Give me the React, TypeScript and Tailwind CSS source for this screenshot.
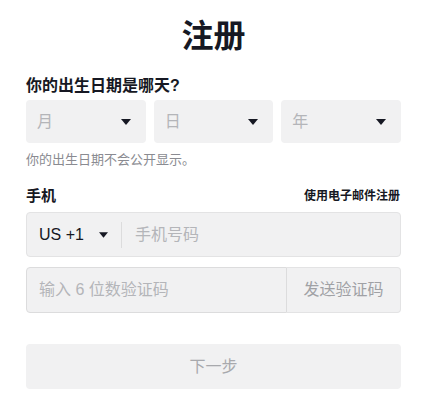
import React from "react";

const FONT = { fontFamily: '"Liberation Sans", "Noto Sans CJK SC", sans-serif' };

function Caret({ w = 10, h = 6 }: { w?: number; h?: number }) {
  return (
    <svg width={w} height={h} viewBox="0 0 10 6" className="shrink-0">
      <path d="M0 0 H10 L5 6 Z" fill="#161823" />
    </svg>
  );
}

function DateSelect({ label }: { label: string }) {
  return (
    <div className="flex-1 h-[43px] rounded-[4px] bg-[#f1f1f2] flex items-center justify-between pl-[11px] pr-[15px]">
      <span className="text-[16px] text-[#b4b5b9]">{label}</span>
      <Caret />
    </div>
  );
}

export default function App() {
  return (
    <div className="w-[434px] h-[394px] bg-white overflow-hidden" style={FONT}>
      <div className="w-[375px] ml-[26px] flex flex-col">
        <h1 className="mt-[16px] text-center text-[32px] leading-[40px] font-bold text-[#161823]">注册</h1>
        <div className="mt-[20px] text-[16px] leading-[20px] font-bold text-[#161823]">你的出生日期是哪天?</div>
        <div className="mt-[4px] flex gap-[8px]">
          <DateSelect label="月" />
          <DateSelect label="日" />
          <DateSelect label="年" />
        </div>
        <div className="mt-[8px] text-[13px] leading-[18px] text-[#8a8b91]">你的出生日期不会公开显示。</div>
        <div className="mt-[17px] flex items-center justify-between">
          <span className="text-[15px] leading-[20px] font-bold text-[#161823]">手机</span>
          <span className="text-[12px] leading-[18px] font-semibold text-[#161823] mr-[1px]">使用电子邮件注册</span>
        </div>
        <div className="mt-[6px] h-[45px] rounded-[4px] bg-[#f1f1f2] border border-[#e3e3e4] flex items-center">
          <span className="ml-[12px] text-[16px] text-[#161823]">US +1</span>
          <span className="ml-[15px]"><Caret w={9} h={6} /></span>
          <span className="ml-[13px] w-px h-[26px] bg-[#dcdcdd]" />
          <span className="ml-[13px] text-[16px] text-[#b4b5b9]">手机号码</span>
        </div>
        <div className="mt-[10px] h-[46px] flex">
          <div className="flex-1 rounded-l-[4px] bg-[#f1f1f2] border border-[#dcdcdd] flex items-center pl-[12px]">
            <span className="text-[16px] text-[#b4b5b9]">输入 6 位数验证码</span>
          </div>
          <div className="w-[114px] rounded-r-[4px] bg-[#f1f1f2] border border-[#e3e3e4] border-l-0 flex items-center justify-center">
            <span className="text-[16px] text-[#a0a1a5]">发送验证码</span>
          </div>
        </div>
        <div className="mt-[31px] h-[45px] rounded-[4px] bg-[#f1f1f2] flex items-center justify-center">
          <span className="text-[16px] text-[#a8a9ad]">下一步</span>
        </div>
      </div>
    </div>
  );
}
